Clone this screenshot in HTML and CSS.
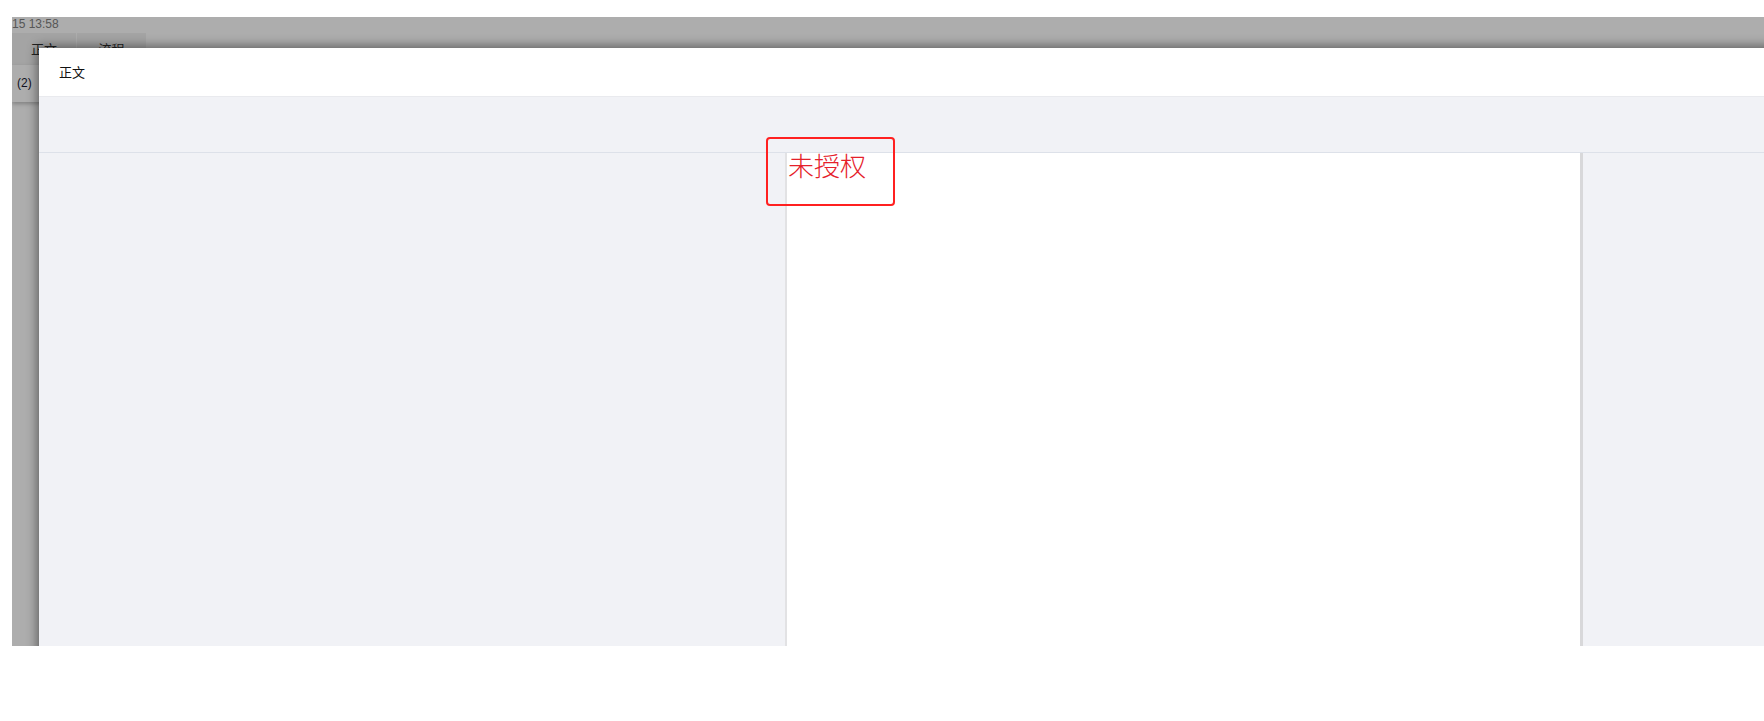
FILE: index.html
```html
<!DOCTYPE html>
<html lang="zh">
<head>
<meta charset="utf-8">
<title>正文</title>
<link rel="stylesheet" href="styles.css">
</head>
<body>
<div class="frame">
  <div class="app">
    <div class="time">15 13:58</div>
    <div class="tabs">
      <div class="tab active">正文</div>
      <div class="tab">流程</div>
    </div>
    <div class="sub">(2)</div>
  </div>
  <div class="mask"></div>
  <div class="modal">
    <div class="modal-head">正文</div>
    <div class="toolbar"></div>
    <div class="doc-area">
      <div class="page"><span class="watermark">未授权</span></div>
    </div>
  </div>
</div>
<div class="annot"></div>
</body>
</html>
```
FILE: styles.css
```css
html, body {
  margin: 0;
  padding: 0;
  background: #ffffff;
  width: 1764px;
  height: 721px;
  overflow: hidden;
  font-family: "Noto Sans CJK SC", "Noto Sans", sans-serif;
}
.frame {
  position: relative;
  margin: 17px 0 0 12px;
  width: 1752px;
  height: 629px;
  overflow: hidden;
  background: #ffffff;
}
.app {
  display: flex;
  flex-direction: column;
}
.time {
  height: 16px;
  line-height: 14px;
  font-family: "Liberation Sans", "Noto Sans", sans-serif;
  font-size: 12px;
  color: #808080;
}
.tabs {
  display: flex;
  gap: 1px;
  height: 32px;
}
.tab {
  width: 64px;
  background: #f2f2f2;
  font-size: 13px;
  line-height: 32px;
  text-align: center;
  color: #333;
}
.tab + .tab {
  width: 69px;
}
.sub {
  height: 37px;
  line-height: 36px;
  padding-left: 5px;
  font-family: "Liberation Sans", "Noto Sans", sans-serif;
  font-size: 12px;
  color: #1a1a33;
  box-shadow: 0 2px 4px rgba(0, 0, 0, 0.25);
}
.mask {
  position: absolute;
  inset: 0;
  background: rgba(0, 0, 0, 0.32);
}
.modal {
  position: absolute;
  left: 27px;
  top: 31px;
  width: 2290px;
  height: 700px;
  background: #f1f2f6;
  box-shadow: 0 0 10px 2px rgba(0, 0, 0, 0.45);
  display: flex;
  flex-direction: column;
}
.modal-head {
  height: 48px;
  line-height: 48px;
  padding-left: 20px;
  background: #ffffff;
  border-bottom: 1px solid #e9eaee;
  font-size: 13px;
  color: #111;
}
.toolbar {
  height: 55px;
  border-bottom: 1px solid #dde1e9;
}
.doc-area {
  flex: 1;
  display: flex;
  justify-content: center;
}
.page {
  width: 793px;
  background: #ffffff;
  border-left: 2px solid #e2e2e4;
  border-right: 3px solid #d8d8da;
}
.watermark {
  display: block;
  margin-top: -4px;
  padding-left: 1px;
  font-size: 26px;
  line-height: 32px;
  color: #e5202a;
  font-weight: 300;
}
.annot {
  position: absolute;
  left: 766px;
  top: 137px;
  width: 125px;
  height: 65px;
  border: 2.5px solid #ff2020;
  border-radius: 4px;
}
```
